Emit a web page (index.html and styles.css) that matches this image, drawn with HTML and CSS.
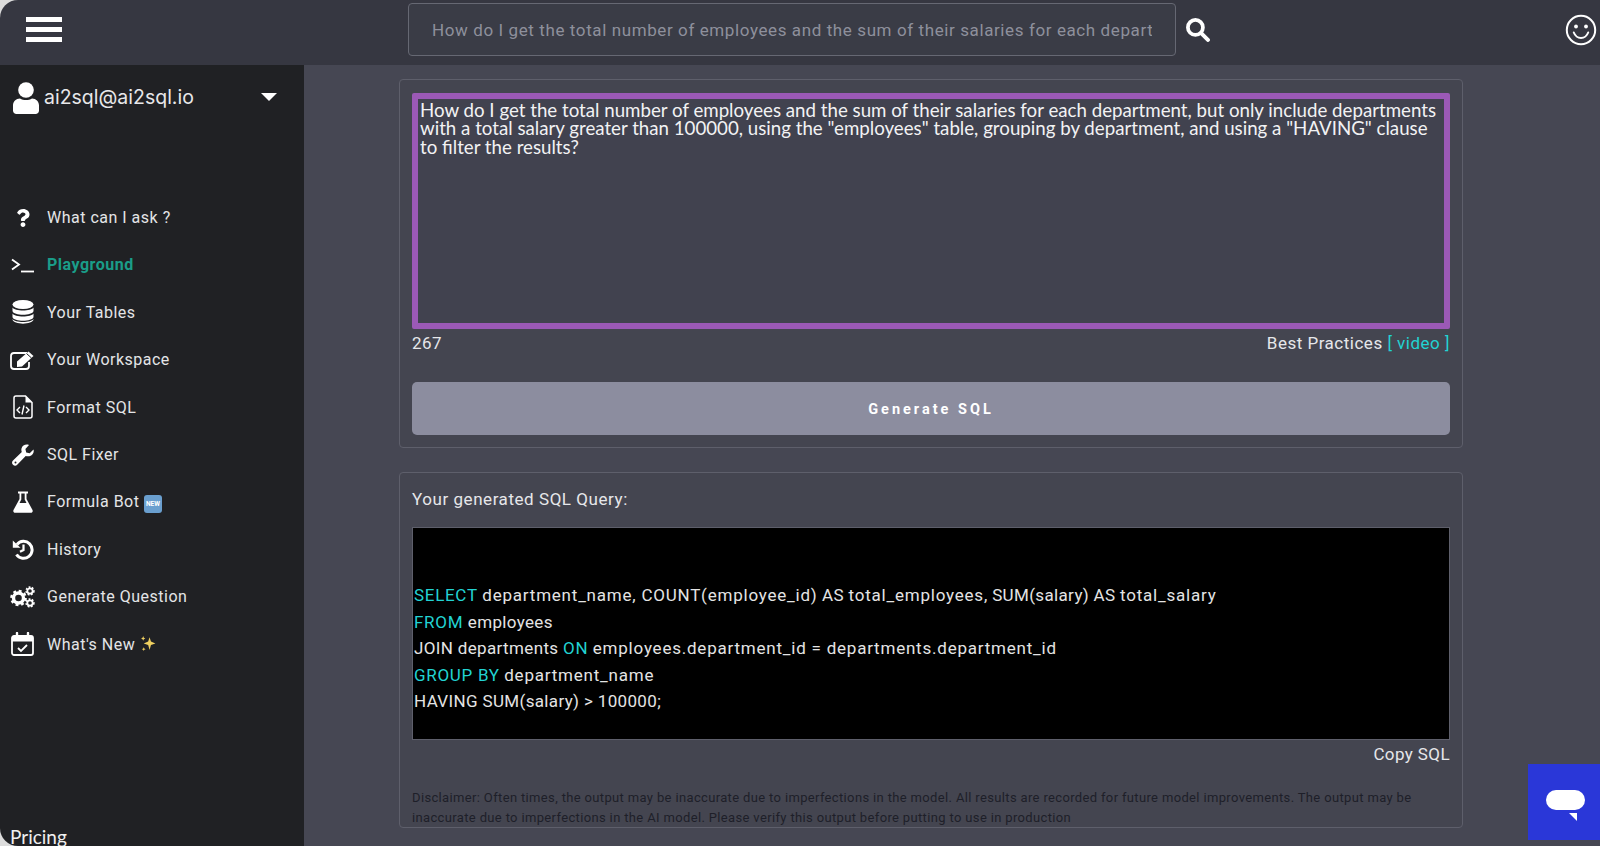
FILE: index.html
```html
<!DOCTYPE html>
<html lang="en">
<head>
<meta charset="utf-8">
<title>AI2SQL Playground</title>
<link rel="stylesheet" href="styles.css">
</head>
<body>
<div class="app">
  <header class="topbar">
    <button class="burger" aria-label="Menu"><span></span><span></span><span></span></button>
    <div class="search">
      <input class="search-input" type="text" value="How do I get the total number of employees and the sum of their salaries for each department" readonly>
      <svg class="search-icon" viewBox="0 0 24 24"><circle cx="10" cy="10" r="7.2" fill="none" stroke="#fff" stroke-width="3.6"/><path d="M15.5 15.5L22 22" stroke="#fff" stroke-width="3.8" stroke-linecap="round"/></svg>
    </div>
    <svg class="smiley" viewBox="0 0 32 32"><circle cx="16" cy="16" r="14.2" fill="none" stroke="#fff" stroke-width="2"/><circle cx="11" cy="12.5" r="1.9" fill="#fff"/><circle cx="21" cy="12.5" r="1.9" fill="#fff"/><path d="M8.8 18.5c1.5 3.8 4 5.5 7.2 5.5s5.7-1.7 7.2-5.5" fill="none" stroke="#fff" stroke-width="2" stroke-linecap="round"/></svg>
  </header>
  <div class="body">
    <aside class="sidebar">
      <div class="user">
        <svg class="user-icon" viewBox="0 0 26 32"><circle cx="13" cy="8" r="7.8" fill="#fff"/><path d="M7 16.5c3.500 2 8.500 2 12 0 4 0 7 3 7 7v5c0 2-1.500 3.500-3.500 3.500h-19C1.500 32 0 30.500 0 28.500v-5c0-4 3-7 7-7z" fill="#fff"/></svg>
        <span class="user-name">ai2sql@ai2sql.io</span>
        <span class="caret"></span>
      </div>
      <nav class="nav">
        <a class="nav-item"><span class="nav-icon"><svg viewBox="0 0 384 512" width="14" height="18"><path fill="#fff" d="M202 0C122 0 70.500 32.700 30 91c-7.400 10.600-5.100 25 5.200 32.900l43.100 32.700c10.400 7.900 25.100 6 33.300-4.100 25-31.400 43.600-49.500 82.700-49.500 30.800 0 68.800 19.800 68.800 49.600 0 22.600-18.600 34.100-49 51.200-35.400 19.800-82.300 44.500-82.300 106.400V320c0 13.300 10.800 24 24 24h72.500c13.200 0 24-10.700 24-24v-5.800c0-42.800 125.200-44.600 125.200-160.600C377.500 66.300 286.900 0 202 0zM192 373.500c-38.200 0-69.300 31-69.300 69.200 0 38.200 31.100 69.300 69.300 69.300s69.300-31.100 69.300-69.300-31.100-69.200-69.300-69.200z"/></svg></span><span>What can I ask ?</span></a>
        <a class="nav-item active"><span class="nav-icon"><svg viewBox="0 0 24 16" width="24" height="16"><path d="M1 2.500L8 7.500 1 12.500" fill="none" stroke="#fff" stroke-width="1.8"/><path d="M10 14.500h13" stroke="#fff" stroke-width="1.8"/></svg></span><span>Playground</span></a>
        <a class="nav-item"><span class="nav-icon"><svg viewBox="0 0 22 24" width="22" height="24"><ellipse cx="11" cy="4.500" rx="10.500" ry="4.500" fill="#fff"/><path d="M.5 7.500c2 4 19 4 21 0v3.500c-1 5-20 5-21 0zM.5 13.500c2 4 19 4 21 0V17c-1 5-20 5-21 0zM.5 19c2 4 19 4 21 0v.5c-1 5.500-20 5.500-21 0z" fill="#fff"/></svg></span><span>Your Tables</span></a>
        <a class="nav-item"><span class="nav-icon"><svg viewBox="0 0 25 20" width="25" height="20"><path d="M17 3H4a3 3 0 0 0-3 3v10a3 3 0 0 0 3 3h12a3 3 0 0 0 3-3v-4" fill="none" stroke="#fff" stroke-width="1.8"/><path d="M7 11.500L18.500 1.500l5 4.500L12 16.500l-5 .5z" fill="#fff"/><path d="M16.500 3.500l5 4.500" stroke="#202124" stroke-width="1"/></svg></span><span>Your Workspace</span></a>
        <a class="nav-item"><span class="nav-icon"><svg viewBox="0 0 20 24" width="20" height="24"><path d="M12.500 1H3a2 2 0 0 0-2 2v18a2 2 0 0 0 2 2h14a2 2 0 0 0 2-2V7.500z" fill="none" stroke="#fff" stroke-width="1.5"/><path d="M12.500 1v6.500H19z" fill="#fff"/><path d="M7 12l-3 3 3 3M13 12l3 3-3 3M11 10.500l-2 9" fill="none" stroke="#fff" stroke-width="1.4"/></svg></span><span>Format SQL</span></a>
        <a class="nav-item"><span class="nav-icon"><svg viewBox="0 0 22 22" width="22" height="22"><path d="M21.500 5.500l-3.800 3.700-3.500-.8-.8-3.500L17 1c-3-1.200-6.800.3-7.500 3.500-.3 1.300-.1 2.500.3 3.600L1 16.500c-1.300 1.300-1.300 3 0 4.300s3 1.300 4.200 0l8.500-8.800c1.200.4 2.500.5 3.700.2 3.300-.8 5-4 4.100-6.700z" fill="#fff"/><circle cx="3.500" cy="18.500" r="1" fill="#202124"/></svg></span><span>SQL Fixer</span></a>
        <a class="nav-item"><span class="nav-icon"><svg viewBox="0 0 20 22" width="20" height="22"><path d="M5 .5h10v2h-1.500v5.500L19.500 19c.6 1.300-.2 2.800-1.700 2.800H2.200C.7 21.800-.1 20.300.5 19L6.500 8V2.500H5z" fill="#fff"/><path d="M8.300 2.500v6L6.500 12h7l-1.800-3.500v-6z" fill="#202124"/></svg></span><span>Formula Bot <span class="badge-new">NEW</span></span></a>
        <a class="nav-item"><span class="nav-icon"><svg viewBox="0 0 22 22" width="22" height="22"><path d="M5 6.500A8.500 8.500 0 1 1 4.500 16.500" fill="none" stroke="#fff" stroke-width="3"/><path d="M.8 2.500L8.500 9.800H.8z" fill="#fff"/><path d="M11.500 6.500v5.500l-3.500 1.800" fill="none" stroke="#fff" stroke-width="2.2"/></svg></span><span>History</span></a>
        <a class="nav-item"><span class="nav-icon"><svg viewBox="0 0 25 22" width="25" height="22"><circle cx="8.500" cy="12" r="5" fill="none" stroke="#fff" stroke-width="3.4"/><circle cx="8.500" cy="12" r="7" fill="none" stroke="#fff" stroke-width="2.6" stroke-dasharray="2.8 2.7"/><circle cx="20" cy="5" r="2.700" fill="none" stroke="#fff" stroke-width="1.8"/><circle cx="20" cy="5" r="3.900" fill="none" stroke="#fff" stroke-width="1.6" stroke-dasharray="1.8 1.5"/><circle cx="20" cy="17" r="2.700" fill="none" stroke="#fff" stroke-width="1.8"/><circle cx="20" cy="17" r="3.900" fill="none" stroke="#fff" stroke-width="1.6" stroke-dasharray="1.8 1.5"/></svg></span><span>Generate Question</span></a>
        <a class="nav-item"><span class="nav-icon"><svg viewBox="0 0 23 24" width="23" height="24"><rect x="1" y="4" width="21" height="19" rx="2" fill="none" stroke="#fff" stroke-width="1.8"/><path d="M1 4h21v5.500H1z" fill="#fff"/><path d="M6 1v5M17 1v5" stroke="#fff" stroke-width="2.4" stroke-linecap="round"/><path d="M7 16l3 3 6-6" fill="none" stroke="#fff" stroke-width="1.8"/></svg></span><span>What's New <svg class="sparkle" viewBox="0 0 16 16" width="17" height="17"><path d="M9 2l1.300 4.200L14.500 8l-4.200 1.500L9 14 7.700 9.500 3.500 8l4.200-1.800z" fill="#f0d060"/><path d="M3 1l.6 1.700 1.400.6-1.400.6L3 5.500l-.6-1.600L1 3.300l1.400-.6zM3.500 11.500l.5 1.300 1.300.5-1.300.5-.5 1.300-.5-1.300-1.300-.5 1.300-.5z" fill="#f0d060"/></svg></span></a>
      </nav>
      <a class="pricing">Pricing</a>
    </aside>
    <main class="main">
      <section class="card card-query">
        <textarea class="question" readonly>How do I get the total number of employees and the sum of their salaries for each department, but only include departments with a total salary greater than 100000, using the "employees" table, grouping by department, and using a "HAVING" clause to filter the results?</textarea>
        <div class="meta">
          <span>267</span>
          <span>Best Practices <a class="link">[ video ]</a></span>
        </div>
        <button class="generate">Generate SQL</button>
      </section>
      <section class="card card-result">
        <div class="result-title">Your generated SQL Query:</div>
        <div class="code">
          <div class="code-line"><span class="kw">SELECT</span> <span class="id">department_name, COUNT(employee_id)</span> AS <span class="id">total_employees</span>, SUM(salary) AS <span class="id">total_salary</span></div>
          <div class="code-line"><span class="kw">FROM</span> employees</div>
          <div class="code-line">JOIN departments <span class="kw">ON</span> <span class="id">employees.department_id = departments.department_id</span></div>
          <div class="code-line"><span class="kw">GROUP BY</span> <span class="id">department_name</span></div>
          <div class="code-line">HAVING SUM(salary) &gt; 100000;</div>
        </div>
        <div class="copy">Copy SQL</div>
        <p class="disclaimer">Disclaimer: Often times, the output may be inaccurate due to imperfections in the model. All results are recorded for future model improvements. The output may be inaccurate due to imperfections in the AI model. Please verify this output before putting to use in production</p>
      </section>
    </main>
  </div>
  <button class="chat" aria-label="Chat"><span class="chat-bubble"></span><span class="chat-tail"></span></button>
</div>
</body>
</html>
```

FILE: styles.css
```css
* { box-sizing: border-box; }
html, body { margin: 0; height: 100%; overflow: hidden; background: #dcdcdc; }
body { font-family: Roboto, "Liberation Sans", sans-serif; color: #e6e7ea; }

.app {
  position: relative;
  height: 846px;
  display: flex;
  flex-direction: column;
  overflow: hidden;
  border-radius: 18px 0 0 18px;
}

.topbar {
  height: 65px;
  flex: none;
  display: flex;
  align-items: center;
  background: #363741;
  padding-left: 26px;
}
.burger {
  width: 36px;
  height: 25px;
  padding: 0;
  border: 0;
  background: none;
  display: flex;
  flex-direction: column;
  justify-content: space-between;
  margin-top: -6px;
}
.burger span { display: block; height: 5px; background: #fff; }
.search {
  display: flex;
  align-items: center;
  margin-left: 346px;
  margin-top: -6px;
}
.search-input {
  width: 768px;
  height: 53px;
  padding: 0 23px;
  border: 1px solid #666873;
  border-radius: 4px;
  background: #3a3c46;
  color: #8e909c;
  font: 17px Roboto, sans-serif;
  letter-spacing: .6px;
  outline: 0;
}
.search-icon { width: 25px; height: 25px; margin-left: 9px; }
.smiley { width: 32px; height: 32px; margin-left: auto; margin-top: -6px; margin-right: 3px; }

.body { flex: 1; display: flex; min-height: 0; }

.sidebar {
  width: 304px;
  flex: none;
  display: flex;
  flex-direction: column;
  background: #202124;
  overflow: hidden;
}
.user {
  display: flex;
  align-items: center;
  height: 32px;
  margin-top: 16px;
  padding-left: 13px;
}
.user-icon { width: 26px; height: 32px; flex: none; margin-top: 2px; }
.user-name {
  margin-left: 5px;
  font: 19.5px Inter, sans-serif;
  color: #e8e8ea;
}
.caret {
  margin-left: auto;
  margin-right: 27px;
  border-left: 8px solid transparent;
  border-right: 8px solid transparent;
  border-top: 8px solid #fff;
}
.nav { margin-top: 81px; display: flex; flex-direction: column; }
.nav-item {
  height: 47.4px;
  display: flex;
  align-items: center;
  font-size: 16px;
  letter-spacing: .5px;
  color: #e4e5e7;
}
.nav-icon {
  width: 47px;
  flex: none;
  display: flex;
  justify-content: center;
  padding-right: 2px;
}
.active { color: #1a9d89; font-weight: 700; letter-spacing: .5px; }
.active span:last-child { margin-top: -2px; }
.badge-new {
  display: inline-block;
  width: 18px;
  height: 18px;
  border-radius: 3px;
  background: #6a9fcf;
  color: #fff;
  font-size: 6.5px;
  font-weight: 700;
  line-height: 18px;
  text-align: center;
  letter-spacing: 0;
  vertical-align: 1px;
}
.sparkle { vertical-align: -2px; }
.pricing {
  margin-top: auto;
  padding-left: 10px;
  height: 21px;
  font: 19px/24px Lato, sans-serif;
  color: #f0f0f0;
}

.main {
  flex: 1;
  min-width: 0;
  background: #464753;
  padding: 14px 137px 0 95px;
  display: flex;
  flex-direction: column;
  gap: 24px;
}
.card {
  border: 1.5px solid #5e5f6b;
  border-radius: 4px;
  padding: 0 12px;
  background: #444550;
}
.card-query { height: 369px; padding-top: 13px; }
.card-result { height: 356px; }

.question {
  display: block;
  width: 100%;
  height: 236px;
  padding: 2px;
  border: 6px solid #9b59b6;
  border-radius: 2px;
  background: #41424f;
  color: #f2f2f4;
  font: 18.7px/18.4px Lato, sans-serif;
  resize: none;
  outline: 0;
  overflow: hidden;
}
.meta {
  display: flex;
  justify-content: space-between;
  align-items: center;
  height: 28px;
  font-size: 17px;
  letter-spacing: .5px;
}
.link { color: #22d3d3; }
.generate {
  display: block;
  width: 100%;
  height: 53px;
  margin-top: 25px;
  border: 0;
  border-radius: 5px;
  background: #8c8d9f;
  color: #fff;
  font: 700 14.5px Roboto, sans-serif;
  letter-spacing: 3px;
  padding-top: 2px;
}

.result-title {
  height: 54px;
  padding-top: 16px;
  font-size: 17px;
  letter-spacing: .55px;
}
.code {
  height: 213px;
  padding: 54px 1px 0;
  background: #000;
  border: 1px solid #5e5f6b;
  color: #e4e4e4;
  font-size: 17px;
  letter-spacing: .35px;
}
.code-line { height: 26.5px; line-height: 26.5px; white-space: nowrap; }
.kw { color: #22d3d3; letter-spacing: .7px; }
.id { letter-spacing: .78px; }
.copy {
  height: 30px;
  padding-top: 4px;
  text-align: right;
  font-size: 17px;
  letter-spacing: .4px;
}
.disclaimer {
  margin: 18px 0 0;
  font-size: 13px;
  line-height: 20px;
  letter-spacing: .35px;
  color: #1e1f29;
}

.chat {
  position: absolute;
  right: 0;
  top: 764px;
  width: 72px;
  height: 76px;
  border: 0;
  padding: 0;
  background: #2a37d8;
}
.chat-bubble {
  position: absolute;
  left: 18px;
  top: 26px;
  width: 39px;
  height: 20px;
  border-radius: 10px;
  background: #fff;
}
.chat-tail {
  position: absolute;
  left: 41px;
  top: 49px;
  border-top: 8px solid #fff;
  border-left: 8px solid transparent;
}
```
